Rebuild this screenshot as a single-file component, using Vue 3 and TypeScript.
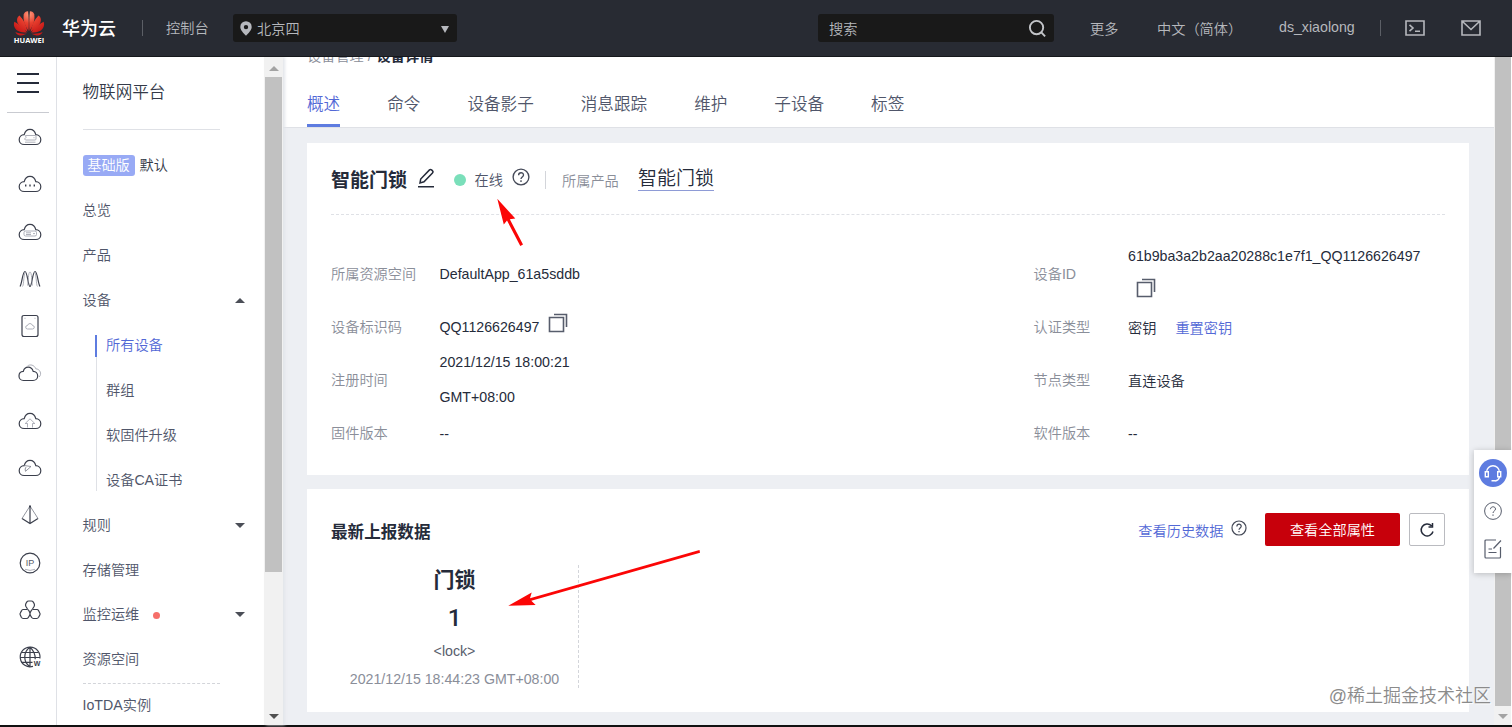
<script setup lang="ts">
interface Shape { d: string; tone?: string }
interface RailIcon { name: string; shapes: Shape[]; label?: string }

const cloud = 'M6.2 19.5h11.600c3 0 5-2.100 5-4.800 0-2.800-2.200-4.900-5-5C17 6.400 14.900 4.400 12 4.400S7 6.400 6.200 9.700c-2.800.1-5 2.200-5 5 0 2.700 2 4.800 5 4.800z'

const railIcons: RailIcon[] = [
  { name: 'server', shapes: [{ d: cloud }, { d: 'M7.500 10.500h9.500q1 0 1 1v2.500q0 1-1 1H7.500l-1-1 1.500-1.500zM7 17.200h10.500M15.500 12.700h1', tone: 'soft' }] },
  { name: 'dots', shapes: [{ d: cloud }, { d: 'M7 13.500h1.400M11.300 13.500h1.400M15.600 13.500h1.400', tone: 'bold' }] },
  { name: 'bare-metal', shapes: [{ d: cloud }, { d: 'M7.500 11h9.500q1.500 0 1.500 1.500v2q0 1.500-1.500 1.500H7.500Q6 16 6 14.500v-2Q6 11 7.500 11zM8 12.800h5M8 14.500h5M15 13.600h2', tone: 'soft' }] },
  { name: 'scaling', shapes: [{ d: 'M2 19.500C4 17 4.500 4.500 7 4.500s3 15 5 15 2.500-15 5-15 3 12.500 5 15' }, { d: 'M4.500 19.500c1.500-1 1-15 3.500-15M9.500 18.500c1-3 .5-13.500 2.500-13.500s1.500 10.500 2.500 13.500M19.500 19.500c-1.500-1-1-15-3.500-15', tone: 'soft' }] },
  { name: 'disk', shapes: [{ d: 'M6 1.500h12q2 0 2 2v17q0 2-2 2H6q-2 0-2-2v-17q0-2 2-2z' }, { d: 'M9.500 15h5q1.800-.2 1.800-1.800T14.500 11.500q-.6-2-2.500-2t-2.500 2q-1.800 0-1.800 1.700T9.500 15zM6.500 4.300h1M16.500 4.300h1', tone: 'soft' }] },
  { name: 'clouds', shapes: [{ d: 'M5.500 19.500h9.500c2.800 0 4.700-2 4.700-4.500 0-2.600-2-4.500-4.500-4.600-.8-2.600-2.600-4.200-5-4.200s-4.200 1.600-4.900 4.200C2.900 10.500 1 12.400 1 15c0 2.500 1.800 4.500 4.500 4.500z' }, { d: 'M9.500 5c2.500-2 6.800-1.200 8.300 2.800 4.200.3 6.400 5 3.400 8.200', tone: 'soft' }] },
  { name: 'upload', shapes: [{ d: cloud }, { d: 'M9.500 18.500v-4H7.200L12 9.800l4.800 4.700h-2.300v4', tone: 'soft' }] },
  { name: 'speed', shapes: [{ d: cloud }, { d: 'M6 9.500l7 1-5.500 4.800q-1-2.500.5-4.200', tone: 'mid' }] },
  { name: 'prism', shapes: [{ d: 'M12 3v17.500M4 15.500l8 5 8-5' }, { d: 'M12 3L4 15.500M12 3l8 12.500', tone: 'mid' }, { d: 'M11 3.500h2', tone: 'bold' }] },
  { name: 'ip', label: 'IP', shapes: [{ d: 'M12 2.200a9.800 9.800 0 1 0 0 19.600 9.800 9.800 0 0 0 0-19.600z' }, { d: 'M7 18.300q5 2.200 10 0', tone: 'soft' }] },
  { name: 'nodes', shapes: [{ d: 'M9.500 11L7.800 8.300Q7.200 7 7.800 5.700l.9-1.600q.7-1.100 2-1.100h2.600q1.300 0 2 1.100l.9 1.600q.6 1.300 0 2.600L14.500 11M5 11.500h4.200q1 0 1.600 1L12 15l-.2 2-1.300 2.300q-.7 1.200-2 1.200H5.200q-1.200 0-1.900-1.200L2.300 17q-.6-1 0-2l1.300-2.400q.5-1 1.400-1.100zM14.800 11.500H19q1 0 1.500 1l1.300 2.500q.6 1 0 2l-1.200 2.300q-.7 1.200-1.900 1.200h-3.200q-1.300 0-2-1.200L12.200 17 12 15l1.300-2.500q.5-1 1.500-1z' }] },
  { name: 'web', label: 'W', shapes: [{ d: 'M15 21.400A9.900 9.900 0 1 1 21.900 13.500' }, { d: 'M3.500 7.500h17M2 12.500h20M3.500 17.300h11M12 2.200v19.600M12 2.200C5 7 5 17 12 21.800M12 2.200q5.500 4.800 5.200 12' }] },
]

const subItems: string[] = ['所有设备', '群组', '软固件升级', '设备CA证书']
const tabs: string[] = ['概述', '命令', '设备影子', '消息跟踪', '维护', '子设备', '标签']
</script>

<template>
  <div class="page">
    <header class="topbar">
      <svg class="logo" viewBox="0 0 32 34">
        <defs>
          <radialGradient id="petal" gradientUnits="userSpaceOnUse" cx="16" cy="4" r="20">
            <stop offset="0" stop-color="#ff9a7c" />
            <stop offset="0.45" stop-color="#e8402f" />
            <stop offset="1" stop-color="#c81a18" />
          </radialGradient>
        </defs>
        <g fill="url(#petal)">
          <path d="M15.500 21C11.500 15 9.800 10 10.800 4.300 11.300 2 13.300 1 15.100 1.200 15.800 8 16 15 15.500 21z" />
          <path d="M16.500 21c4-6 5.700-11 4.700-16.700C20.700 2 18.700 1 16.900 1.200 16.200 8 16 15 16.500 21z" />
          <path d="M14.500 21.700C13.300 15.500 10.800 9.500 6.500 5.400 3.800 7 3.400 10.500 5 13.400c1.900 3.500 6 6.300 9.500 8.300z" />
          <path d="M17.500 21.700c1.200-6.200 3.700-12.200 8-16.300 2.700 1.600 3.100 5.100 1.500 8-1.900 3.500-6 6.300-9.500 8.300z" />
          <path d="M13.900 22.600C10.500 18 6 14 1.400 11.700c-1.300 3.400.2 6.900 2.900 8.700 2.400 1.600 6.300 2.100 9.600 2.200z" />
          <path d="M18.100 22.600c3.400-4.600 7.900-8.600 12.500-10.900 1.300 3.400-.2 6.900-2.900 8.700-2.400 1.600-6.300 2.100-9.600 2.200z" />
          <path d="M13.700 23.600c-4 .6-8.200-.1-11.300-1.500.9 2.300 3.600 3.800 5.700 3.400 2-.2 3.900-.8 5.600-1.900z" />
          <path d="M18.300 23.600c4 .6 8.200-.1 11.300-1.500-.9 2.300-3.600 3.800-5.700 3.400-2-.2-3.900-.8-5.600-1.900z" />
        </g>
        <text x="16" y="33" text-anchor="middle" textLength="30.500" lengthAdjust="spacingAndGlyphs">HUAWEI</text>
      </svg>
      <span class="brand">华为云</span>
      <i class="bar bar-a"></i>
      <span class="console">控制台</span>
      <div class="region">
        <svg class="pin" viewBox="0 0 12 15"><path fill-rule="evenodd" d="M6 .2a5.700 5.700 0 0 1 5.700 5.700C11.700 9 8.500 12 6 14.800 3.500 12 .3 9 .3 5.900A5.700 5.700 0 0 1 6 .2zm0 3.700a2.200 2.200 0 1 0 0 4.400 2.200 2.200 0 0 0 0-4.400z" /></svg>
        <span>北京四</span>
        <i class="caret light"></i>
      </div>
      <div class="search">
        <span>搜索</span>
        <svg viewBox="0 0 20 20"><circle cx="9" cy="9" r="7" /><path d="M14 14l4 4.200" /></svg>
      </div>
      <span class="nav more">更多</span>
      <span class="nav lang">中文（简体）</span>
      <span class="nav user">ds_xiaolong</span>
      <i class="bar bar-b"></i>
      <svg class="top-icon term" viewBox="0 0 20 16"><path d="M1 1h18v14H1zM4.500 4.800L8 8l-3.500 3.200M10 11.300h5" /></svg>
      <svg class="top-icon mail" viewBox="0 0 20 16"><path d="M1 1h18v14H1zM1.500 1.500L10 9.500l8.500-8" /></svg>
    </header>

    <div class="body">
      <nav class="rail">
        <div class="burger"><i></i><i></i><i></i></div>
        <div v-for="icon in railIcons" :key="icon.name" class="rail-item">
          <svg viewBox="0 0 24 24">
            <path v-for="(s, i) in icon.shapes" :key="i" :d="s.d" :class="s.tone" />
            <text v-if="icon.label === 'IP'" class="ip" x="12" y="15.300" text-anchor="middle">IP</text>
            <text v-if="icon.label === 'W'" class="web" x="19" y="21" text-anchor="middle">W</text>
          </svg>
        </div>
      </nav>

      <aside class="side">
        <h2>物联网平台</h2>
        <div class="line"></div>
        <div class="row edition"><b>基础版</b>默认</div>
        <div class="row">总览</div>
        <div class="row">产品</div>
        <div class="row">设备<i class="caret up"></i></div>
        <ul class="sub">
          <li v-for="(s, i) in subItems" :key="s" :class="{ active: i === 0 }">{{ s }}</li>
        </ul>
        <div class="row">规则<i class="caret"></i></div>
        <div class="row">存储管理</div>
        <div class="row">监控运维<i class="alert"></i><i class="caret"></i></div>
        <div class="row">资源空间</div>
        <div class="line dashed"></div>
        <div class="row last">IoTDA实例</div>
      </aside>
      <div class="scroll side-scroll">
        <i class="arrow arrow-up"></i>
        <i class="thumb"></i>
        <i class="arrow arrow-down"></i>
      </div>

      <main class="main">
        <div class="head">
          <div class="crumb">设备管理 / <b>设备详情</b></div>
          <div class="tabs">
            <span v-for="(t, i) in tabs" :key="t" :class="{ on: i === 0 }">{{ t }}</span>
          </div>
        </div>

        <section class="card info">
          <div class="title">
            <h1>智能门锁</h1>
            <svg class="pen" viewBox="0 0 18 20"><path d="M1 18.800h16M3 15l.7-4L12.500 1.900q1-.9 2 0l1.100 1q.9 1-.1 2L7 13.800z" /></svg>
            <i class="dot"></i>
            <span class="state">在线</span>
            <svg class="help" viewBox="0 0 18 18"><circle cx="9" cy="9" r="7.900" /><path d="M6.600 7.300C6.600 3.900 11.500 4 11.500 7c0 1.900-2.500 2-2.500 4M9 12.300v1.600" /></svg>
            <i class="sep"></i>
            <span class="belong">所属产品</span>
            <a class="product">智能门锁</a>
          </div>
          <div class="grid">
            <label>所属资源空间</label><div>DefaultApp_61a5sddb</div>
            <label>设备ID</label>
            <div class="two id"><span>61b9ba3a2b2aa20288c1e7f1_QQ1126626497</span><svg class="copy" viewBox="0 0 20 20"><path d="M1.500 4.500h14v14h-14zM6 1.500h12.500V14" /></svg></div>
            <label>设备标识码</label>
            <div>QQ1126626497<svg class="copy raised" viewBox="0 0 20 20"><path d="M1.500 4.500h14v14h-14zM6 1.500h12.500V14" /></svg></div>
            <label>认证类型</label><div>密钥<a>重置密钥</a></div>
            <label>注册时间</label><div class="two"><span>2021/12/15 18:00:21</span><span>GMT+08:00</span></div>
            <label>节点类型</label><div>直连设备</div>
            <label>固件版本</label><div class="none">--</div>
            <label>软件版本</label><div class="none">--</div>
          </div>
        </section>

        <section class="card data">
          <div class="bar-row">
            <h3>最新上报数据</h3>
            <a>查看历史数据</a>
            <svg class="help small" viewBox="0 0 18 18"><circle cx="9" cy="9" r="7.900" /><path d="M6.600 7.300C6.600 3.900 11.500 4 11.500 7c0 1.900-2.500 2-2.500 4M9 12.300v1.600" /></svg>
            <button class="primary">查看全部属性</button>
            <button class="refresh"><svg viewBox="0 0 16 16"><path d="M12.500 3.800A6 6 0 1 0 14 9.500M13.500 1v4h-4" /></svg></button>
          </div>
          <div class="tile">
            <strong class="name">门锁</strong>
            <strong class="num">1</strong>
            <span class="key">&lt;lock&gt;</span>
            <span class="time">2021/12/15 18:44:23 GMT+08:00</span>
          </div>
        </section>
      </main>
      <div class="scroll main-scroll">
        <i class="thumb"></i>
        <i class="arrow arrow-down pale"></i>
      </div>
    </div>
    <div class="foot"></div>

    <div class="float">
      <svg class="service" viewBox="0 0 28 28"><circle cx="14" cy="14" r="14" /><path d="M7.500 13.500C7.500 4.500 20.500 4.500 20.500 13.500M6.300 12.800h3v5h-3zM18.700 12.800h3v5h-3zM20.500 18q-.8 3.500-4.500 4M12.500 21.800h3.500" /></svg>
      <svg class="f2" viewBox="0 0 18 18"><circle cx="9" cy="9" r="8.400" /><path d="M6.500 7.200C6.500 4 11.500 4 11.500 7c0 2-2.500 2-2.500 4M9 12.400v1.500" /></svg>
      <svg class="f3" viewBox="0 0 18 20"><path d="M12 1H2q-1 0-1 1v16q0 1 1 1h13.500q1 0 1-1V8M17 1.500L9.500 9.500M4.500 10h3.500M4.500 13.500h8" /></svg>
    </div>

    <svg class="marks" viewBox="0 0 1512 727">
      <path d="M497.300 198.800L515.300 218.500 509.800 219.300 523 244.400 520.300 246 507 220.600 503.800 224.600z" />
      <path d="M508.300 605.700L531.700 592.600 530 598.200 699.500 550 700 552.700 531.300 600.700 535.700 604.900z" />
    </svg>
    <div class="credit">@稀土掘金技术社区</div>
  </div>
</template>

<style>
html, body { margin: 0; overflow: hidden; }
</style>

<style scoped>
* { box-sizing: border-box; }
.page {
  position: relative; width: 1512px; height: 727px; overflow: hidden; background: #fff;
  display: flex; flex-direction: column;
  font-family: "Liberation Sans", "Noto Sans CJK SC", sans-serif;
  font-size: 14.2px; font-weight: 350; color: #50566a; white-space: nowrap;
}
svg { flex: none; display: block; fill: none; }
i { display: block; flex: none; font-style: normal; }
h1, h2, h3, ul { margin: 0; padding: 0; }

.topbar { height: 57px; flex: none; background: #282b33; border-bottom: 1px solid #16181c; display: flex; align-items: center; color: #b6b8bd; position: relative; z-index: 2; }
.logo { width: 32px; height: 34px; margin-left: 13px; margin-top: -2px; }
.logo text { font: bold 7.500px "Open Sans", sans-serif; fill: #fff; }
.brand { margin-left: 17px; font-size: 18px; font-weight: 500; color: #fff; width: 54px; margin-top: -2px; }
.bar { width: 1px; height: 16px; background: #5c5f66; }
.bar-a { margin-left: 26px; }
.console { margin-left: 23px; width: 43px; margin-top: -3px; }
.region { margin-left: 24px; width: 224px; height: 28px; background: #191919; border-radius: 3px; display: flex; align-items: center; padding: 0 8px 0 7px; }
.region span, .search span { margin-top: -1px; }
.pin { width: 12px; height: 15px; fill: #b6b8bd; margin-right: 5px; }
.caret { width: 0; height: 0; margin: 3px 0 0 auto; border: 5px solid transparent; border-top: 5.500px solid #4b4e57; border-bottom: 0; }
.caret.up { border-top: 0; border-bottom: 5.500px solid #4b4e57; }
.caret.light { border-width: 7px 4.500px 0; border-top-color: #b6b8bd; margin-top: 2px; }
.search { margin-left: 361px; width: 236px; height: 28px; background: #191919; border-radius: 3px; display: flex; align-items: center; justify-content: space-between; padding: 0 7px 0 11px; }
.search svg { width: 19px; height: 19px; stroke: #c3c5c9; stroke-width: 2; }
.nav { flex: none; }
.more { margin-left: 36px; width: 67px; }
.lang { width: 122px; }
.user { width: 101px; margin-top: -2px; }
.top-icon { width: 20px; height: 16px; stroke: #b6b8bd; stroke-width: 1.600; }
.term { margin-left: 24px; }
.mail { margin-left: 36px; }

.body { height: 668px; flex: none; display: flex; }
.rail { width: 57px; flex: none; border-right: 1px solid #dfe1e6; padding-left: 2px; }
.burger { height: 56px; margin: 0 7px 0 5px; padding: 16px 0 0 10px; border-bottom: 1px solid #c9cbd1; display: flex; flex-direction: column; gap: 7px; }
.burger i { width: 22px; height: 2px; background: #252b3a; }
.rail-item { height: 47.270px; display: flex; align-items: center; justify-content: center; padding: 1px 0 0 1px; }
.rail-item svg { width: 24px; height: 24px; stroke: #3b3f4c; stroke-width: 1.200; }
.rail-item .soft { stroke: #9a9da8; stroke-width: .8; }
.rail-item .mid { stroke: #777b87; stroke-width: .8; }
.rail-item .bold { stroke-width: 1.900; }
.rail-item text { stroke: none; fill: #555966; }
.rail-item .ip { font-size: 9px; }
.rail-item .web { font-size: 7px; font-weight: bold; fill: #3b3f4c; }

.side { width: 207px; flex: none; padding: 0 19px 0 25.500px; }
h2 { font-size: 16.600px; font-weight: 350; color: #343a48; line-height: 20px; margin-top: 26px; }
.line { width: 137px; height: 1px; background: #dfe1e6; margin-top: 26px; margin-bottom: 13px; }
.row { height: 44.900px; display: flex; align-items: center; padding-bottom: 3px; }
.edition { color: #343a48; height: 45.500px; }
.edition b { font-weight: 350; font-size: 14.200px; background: #98aaf5; color: #fff; border-radius: 3px; height: 21px; width: 52px; line-height: 20px; text-align: center; margin: 2px 5px 0 0; }
.sub { list-style: none; margin-left: 13px; }
.sub li { height: 44.900px; display: flex; align-items: center; padding: 0 0 3px 10.500px; position: relative; }
.sub li::before { content: ""; position: absolute; left: 0; top: 0; bottom: 0; width: 1.500px; background: #dfe1e6; }
.sub li:first-child::before { background: linear-gradient(#5e7ce0, #5e7ce0) 0 0 / 2px 22px no-repeat, linear-gradient(#dfe1e6, #dfe1e6) 1px 22px / 1px 30px no-repeat; top: 12px; width: 3px; left: -1px; }
.sub li:last-child::before { bottom: 12px; }
.sub .active { color: #5268d6; }
.alert { width: 7px; height: 7px; border-radius: 50%; background: #f66f6a; margin-left: 14px; margin-top: 5px; }
.line.dashed { background: none; border-top: 1px dashed #d3d5da; margin: 1px 0 0; }
.last { height: 43px; }

.scroll { flex: none; display: flex; flex-direction: column; align-items: center; background: #f1f1f1; }
.side-scroll { width: 19px; position: relative; box-shadow: 2px 0 3px #e3e5ea; z-index: 1; }
.side-scroll .thumb { width: 17px; height: 495px; background: #c1c1c1; margin-bottom: auto; }
.arrow { width: 0; height: 0; border: 5px solid transparent; }
.arrow-up { border-top: 0; border-bottom: 5px solid #a3a3a3; margin: 9px 0 6px; }
.arrow-down { border-bottom: 0; border-top: 5px solid #505050; margin-bottom: 6px; }
.main-scroll { width: 18px; border-right: 1px solid #fff; }
.main-scroll .thumb { width: 16px; height: 649px; background: #c1c1c1; margin-bottom: auto; }
.pale { border-top-color: #a3a3a3; }

.main { width: 1211px; flex: none; background: #edeff3; overflow: hidden; display: flex; flex-direction: column; }
.head { background: #fff; height: 71px; flex: none; border-bottom: 1px solid #dfe1e6; padding-left: 24px; display: flex; flex-direction: column; }
.crumb { height: 18px; line-height: 18px; margin-top: -10px; color: #8a8e99; }
.crumb b { color: #252b3a; font-weight: 700; margin-left: 1px; }
.tabs { display: flex; gap: 47px; margin-top: 16px; font-size: 16.600px; }
.tabs span { height: 46px; line-height: 47px; }
.tabs .on { color: #5268d6; border-bottom: 3px solid #5e7ce0; }
.card { background: #fff; margin-left: 24px; width: 1162px; padding: 0 24px; flex: none; }
.info { margin-top: 14.500px; height: 332.500px; }
.title { height: 72px; border-bottom: 1px dashed #dfe1e6; display: flex; align-items: center; }
h1 { font-size: 19px; font-weight: 700; color: #252b3a; width: 76px; }
.pen { width: 18px; height: 20px; stroke: #252b3a; stroke-width: 1.500; margin-left: 10px; }
.dot { width: 12px; height: 12px; border-radius: 50%; background: #7adfba; margin: 3px 0 0 18.500px; }
.state { margin: 2px 0 0 9px; width: 29px; }
.help { width: 18px; height: 18px; stroke: #454a58; stroke-width: 1.350; margin-left: 8.500px; }
.title .help { margin-top: -2px; }
.sep { width: 1px; height: 18px; background: #d3d5da; margin: 4px 0 0 15px; }
.belong { color: #8a8e99; margin: 3px 0 0 16px; width: 57px; }
.product { margin: 2px 0 0 19px; font-size: 19px; color: #252b3a; line-height: 22px; border-bottom: 1px solid #8e9bd6; }
.grid { margin-top: 23.500px; display: grid; grid-template-columns: 108.500px 594px 94.500px 1fr; grid-template-rows: 71px 35.500px 71px 35.500px; color: #252b3a; }
.grid > * { display: flex; align-items: center; }
.grid label { color: #8a8e99; padding-bottom: 2px; }
.grid > .two { flex-direction: column; align-items: flex-start; line-height: 35.500px; }
.grid a { color: #5268d6; margin-left: 19px; }
.grid .none { padding-top: 1px; }
.copy { width: 20px; height: 20px; stroke: #575d6c; stroke-width: 1.600; margin-left: 9px; }
.raised { margin-top: -8px; }
.id .copy { margin-left: 8px; margin-top: 3px; }
.grid > .id { padding-top: 1px; }
.data { margin-top: 14px; height: 223px; padding-top: 24px; }
.bar-row { display: flex; align-items: center; height: 33px; }
h3 { font-size: 16.600px; font-weight: 700; color: #252b3a; margin: 2px auto 0 0; }
.bar-row a { color: #5268d6; }
.small { width: 16px; height: 16px; margin: -3px 18px 0 7.500px; }
button { font: inherit; height: 33px; border: 0; padding: 0; border-radius: 2px; }
.primary { width: 135px; background: #c7000b; color: #fff; padding-bottom: 2px; }
.refresh { width: 36px; margin-left: 9px; background: #fff; border: 1px solid #babbc0; display: flex; align-items: center; justify-content: center; }
.refresh svg { width: 16px; height: 16px; stroke: #252b3a; stroke-width: 1.500; }
.tile { width: 248px; height: 123px; margin-top: 19px; border-right: 1px dashed #d3d5da; display: flex; flex-direction: column; align-items: center; color: #252b3a; }
.name { font-size: 21px; line-height: 30px; font-weight: 700; }
.num { font-family: Roboto, sans-serif; font-size: 24px; font-weight: 500; line-height: 30px; margin-top: 8px; }
.key { line-height: 20px; margin-top: 8px; color: #575d6c; }
.time { line-height: 20px; margin-top: 8px; color: #8a8e99; }
.foot { height: 2px; background: #111; }

.float { position: absolute; right: 0; top: 450px; width: 38px; height: 123px; background: #fff; box-shadow: 0 1px 6px rgba(0, 0, 0, .22); display: flex; flex-direction: column; align-items: center; z-index: 3; }
.service { width: 28px; height: 28px; margin-top: 9px; stroke: #fff; stroke-width: 1.400; }
.service circle { fill: #5e7ce0; stroke: none; }
.f2 { width: 18px; height: 18px; margin-top: 15px; stroke: #575d6c; stroke-width: 1; }
.f3 { width: 18px; height: 20px; margin-top: 19px; stroke: #575d6c; stroke-width: 1.200; }
.marks { position: absolute; left: 0; top: 0; width: 1512px; height: 727px; fill: #fb0606; z-index: 4; pointer-events: none; }
.credit { position: absolute; right: 21px; top: 684px; font-size: 18px; line-height: 24px; color: #8b8b8b; text-shadow: 1px 1px 1px #fff; z-index: 5; }
</style>
